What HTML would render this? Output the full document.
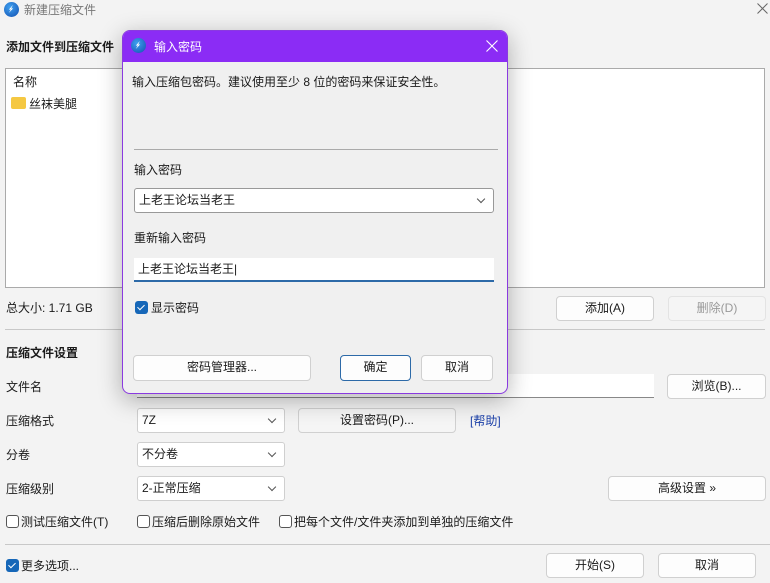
<!DOCTYPE html><html><head><meta charset="utf-8"><style>
*{box-sizing:border-box;margin:0;padding:0}
body{width:770px;height:583px;background:#f3f3f3;font-family:"Liberation Sans","Noto Sans CJK SC",sans-serif;font-size:12px;color:#1a1a1a;position:relative;overflow:hidden}
.a{position:absolute;white-space:nowrap}
.btn{position:absolute;background:#fdfdfd;border:1px solid #d0d0d0;border-radius:4px;text-align:center;line-height:22px}
.sel{position:absolute;background:#fff;border:1px solid #cfcfcf;border-radius:3px;padding-left:4px;line-height:22px}
.sel:after{content:"";position:absolute;right:9px;top:7px;width:5px;height:5px;border-right:1px solid #555;border-bottom:1px solid #555;transform:rotate(45deg)}
.cb{position:absolute;width:13px;height:13px;border:1px solid #555;border-radius:3px;background:#fff}
.cbc{position:absolute;width:13px;height:13px;border-radius:3px;background:#1667b8}
.cbc:after{content:"";position:absolute;left:4px;top:2px;width:3px;height:6px;border-right:1.5px solid #fff;border-bottom:1.5px solid #fff;transform:rotate(45deg)}
.sep{position:absolute;height:1px;background:#c8c8c8}
.ico{position:absolute;width:15px;height:15px;border-radius:50%;background:radial-gradient(circle at 40% 35%,#3fa0f0,#1250b0)}
.ico:after{content:"";position:absolute;left:5px;top:3px;width:4px;height:8px;background:#fff;transform:skewX(-20deg);clip-path:polygon(60% 0,0 60%,50% 55%,30% 100%,100% 40%,50% 45%)}
</style></head><body>
<div class="ico" style="left:4px;top:2px"></div>
<div class="a" style="left:24px;top:1px;color:#777;font-size:12px">新建压缩文件</div>
<svg class="a" style="left:757px;top:3px" width="11" height="11"><path d="M0.5 0.5L10.5 10.5M10.5 0.5L0.5 10.5" stroke="#666" stroke-width="1"/></svg>
<div class="a" style="left:6px;top:38px;font-weight:bold">添加文件到压缩文件</div>
<div class="a" style="left:5px;top:68px;width:760px;height:220px;background:#fff;border:1px solid #aaa"></div>
<div class="a" style="left:13px;top:73px">名称</div>
<div class="a" style="left:11px;top:97px;width:15px;height:12px;background:#f5c842;border-radius:2px"></div>
<div class="a" style="left:29px;top:95px">丝袜美腿</div>
<div class="a" style="left:6px;top:299px">总大小: 1.71 GB</div>
<div class="btn" style="left:556px;top:296px;width:98px;height:25px">添加(A)</div>
<div class="btn" style="left:668px;top:296px;width:98px;height:25px;color:#999;background:#f5f5f5;border-color:#e3e3e3">删除(D)</div>
<div class="sep" style="left:5px;top:329px;width:760px"></div>
<div class="a" style="left:6px;top:344px;font-weight:bold">压缩文件设置</div>
<div class="a" style="left:6px;top:378px">文件名</div>
<div class="a" style="left:137px;top:374px;width:517px;height:24px;background:#fff;border-bottom:1px solid #888"></div>
<div class="btn" style="left:667px;top:374px;width:99px;height:25px">浏览(B)...</div>
<div class="a" style="left:6px;top:412px">压缩格式</div>
<div class="sel" style="left:137px;top:408px;width:148px;height:25px">7Z</div>
<div class="btn" style="left:298px;top:408px;width:158px;height:25px;background:#f5f5f5">设置密码(P)...</div>
<div class="a" style="left:470px;top:412px;color:#1a3fa8">[帮助]</div>
<div class="a" style="left:6px;top:446px">分卷</div>
<div class="sel" style="left:137px;top:442px;width:148px;height:25px">不分卷</div>
<div class="a" style="left:6px;top:480px">压缩级别</div>
<div class="sel" style="left:137px;top:476px;width:148px;height:25px">2-正常压缩</div>
<div class="btn" style="left:608px;top:476px;width:158px;height:25px">高级设置 »</div>
<div class="cb" style="left:6px;top:515px"></div><div class="a" style="left:21px;top:513px">测试压缩文件(T)</div>
<div class="cb" style="left:137px;top:515px"></div><div class="a" style="left:152px;top:513px">压缩后删除原始文件</div>
<div class="cb" style="left:279px;top:515px"></div><div class="a" style="left:294px;top:513px">把每个文件/文件夹添加到单独的压缩文件</div>
<div class="sep" style="left:5px;top:544px;width:765px"></div>
<div class="cbc" style="left:6px;top:559px"></div><div class="a" style="left:21px;top:557px">更多选项...</div>
<div class="btn" style="left:546px;top:553px;width:98px;height:25px">开始(S)</div>
<div class="btn" style="left:658px;top:553px;width:98px;height:25px">取消</div>

<div class="a" style="left:122px;top:30px;width:386px;height:364px;background:#f0f0f0;border:1px solid #8a3ae0;border-radius:8px;box-shadow:0 6px 24px rgba(0,0,0,.3);overflow:hidden">
<div style="position:absolute;left:0;top:0;width:100%;height:31px;background:#8b2cf5"></div>
<div class="ico" style="left:8px;top:7px"></div>
<div class="a" style="left:31px;top:7px;color:#fff">输入密码</div>
<svg class="a" style="left:363px;top:9px" width="12" height="12"><path d="M0.5 0.5L11.5 11.5M11.5 0.5L0.5 11.5" stroke="#fff" stroke-width="1.1"/></svg>
<div class="a" style="left:9px;top:42px">输入压缩包密码。建议使用至少 8 位的密码来保证安全性。</div>
<div class="sep" style="left:11px;top:118px;width:364px;background:#aaa"></div>
<div class="a" style="left:11px;top:130px">输入密码</div>
<div class="sel" style="left:11px;top:157px;width:360px;height:25px;border-color:#999">上老王论坛当老王</div>
<div class="a" style="left:11px;top:198px">重新输入密码</div>
<div class="a" style="left:11px;top:227px;width:360px;height:24px;background:#fff;border-bottom:2px solid #2d6aa8;padding-left:4px;line-height:22px">上老王论坛当老王|</div>
<div class="cbc" style="left:12px;top:270px"></div><div class="a" style="left:28px;top:268px">显示密码</div>
<div class="btn" style="left:10px;top:324px;width:178px;height:26px">密码管理器...</div>
<div class="btn" style="left:217px;top:324px;width:71px;height:26px;border-color:#2d6aa8">确定</div>
<div class="btn" style="left:298px;top:324px;width:72px;height:26px">取消</div>
</div>
</body></html>
